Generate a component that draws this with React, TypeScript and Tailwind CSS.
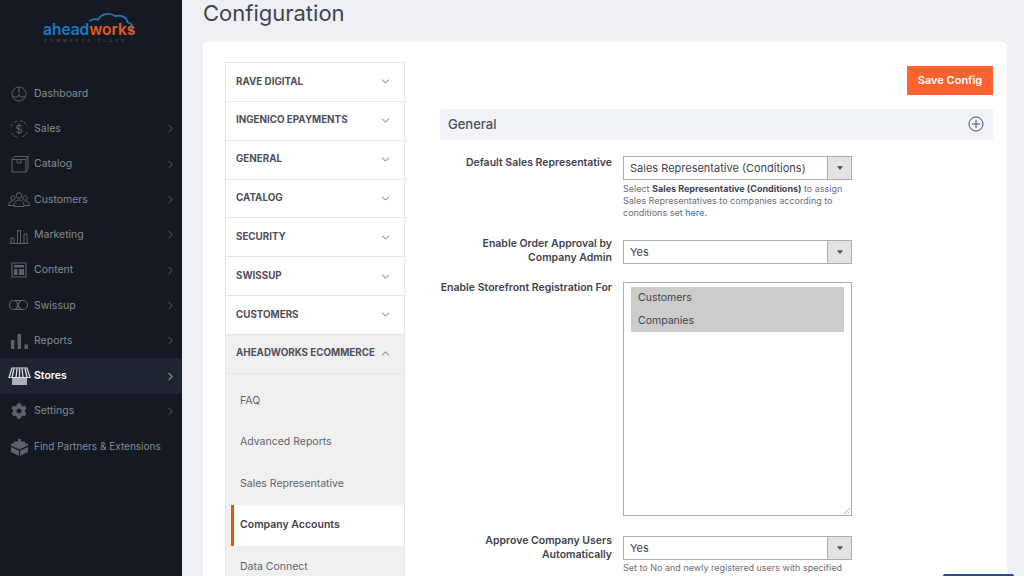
import { ChevronRight, ChevronDown, ChevronUp } from "lucide-react";
import { FaCog } from "react-icons/fa";
import type { ReactNode } from "react";

const FONT = "font-['Inter','Liberation_Sans',sans-serif]";

const ICON = "w-[24px] h-[24px] shrink-0";

const Dashboard = () => (
  <svg viewBox="0 0 24 24" className={ICON} fill="none" stroke="#5a606c" strokeWidth="1">
    <circle cx="12" cy="12" r="7" />
    <path d="M12 6v5M5.500 14.500c2 .5 3.500.5 5 .5l1.500-2.500 1.500 2.500c1.500 0 3 0 5-.5" />
  </svg>
);
const Sales = () => (
  <svg viewBox="0 0 24 24" className={ICON} fill="none" stroke="#5a606c" strokeWidth="1">
    <path d="M7 5.500a8 8 0 0 1 4-1.500M13 4a8 8 0 0 1 7 4.500M20 15a8 8 0 0 1-6 5M10 20a8 8 0 0 1-6-5M4 9.500a8 8 0 0 1 1.500-2.500" strokeDasharray="3 1" />
    <path d="M15 9.500c-.5-1.500-5-2-5.500.5s5.500 1.500 5.500 4-5 2-6 .5M12 6.500v11" strokeWidth="1.100" />
  </svg>
);
const Catalog = () => (
  <svg viewBox="0 0 24 24" className={ICON} fill="none" stroke="#5a606c" strokeWidth="1">
    <path d="M5 7.500h14V20H5zM5 7.500l2-3h14v12l-2 3.500M19 7.500l2-3M10 7.500v3.500h4V7.500" />
  </svg>
);
const Customers = () => (
  <svg viewBox="0 0 24 24" className={ICON} fill="none" stroke="#5a606c" strokeWidth="1">
    <circle cx="12" cy="7.500" r="2.800" />
    <circle cx="6" cy="10" r="2.200" />
    <circle cx="18" cy="10" r="2.200" />
    <path d="M1.500 17.500c0-3 2-4.500 4.500-4.500M22.500 17.500c0-3-2-4.500-4.500-4.500M7 18.500c0-4 2-6.500 5-6.500s5 2.500 5 6.500zM1.500 17.500H7M17 17.500h5.500" />
  </svg>
);
const Marketing = () => (
  <svg viewBox="0 0 24 24" className={ICON} fill="none" stroke="#5a606c" strokeWidth="1">
    <path d="M2.500 20.500h19M4 20v-5h3v5M10.500 20V7.500h3V20M17 20V11h3v9" />
  </svg>
);
const Content = () => (
  <svg viewBox="0 0 24 24" className={ICON} fill="none" stroke="#5a606c" strokeWidth="1.200">
    <path d="M5 5h14v14H5z" />
    <path d="M7 7h10v2.500H7zM7 11h3.500v6H7zM12 11h5v6h-5z" fill="#5a606c" stroke="none" />
  </svg>
);
const Swissup = () => (
  <svg viewBox="0 0 24 24" className={ICON} fill="none" stroke="#5a606c" strokeWidth="1.200">
    <rect x="2.500" y="7.500" width="18" height="9" rx="4.500" />
    <path d="M8 8c3 0 3 8 6 8M8 16c3 0 3-8 6-8" />
  </svg>
);
const Reports = () => (
  <svg viewBox="0 0 24 24" className={ICON} fill="#5a606c">
    <path d="M4 11h3.500v9H4zM10.500 5h3.500v15h-3.500zM17.500 15.500H21V20h-3.500z" />
  </svg>
);
const Stores = () => (
  <svg viewBox="0 0 24 24" className={ICON}>
    <path d="M5 14h15v7H5z" fill="#aab0bd" />
    <path d="M5 4h15l3 9.500H2z" fill="none" stroke="#dfe2e8" strokeWidth="1.200" />
    <path d="M7 4.500l-2 9M10 4.500l-1 9M12.500 4.500v9M15 4.500l1 9M18 4.500l2 9" stroke="#dfe2e8" strokeWidth="1.300" />
  </svg>
);
const Settings = () => (
  <div className={`${ICON} flex items-center justify-center`}>
    <FaCog size={16} color="#5a606c" />
  </div>
);
const Partners = () => (
  <svg viewBox="0 0 24 24" className={ICON} fill="#5a606c">
    <path d="M12.500 5.500 21 9v1.500l-8.500 4L4 10.500V9z" />
    <path d="M7 6.500h3V8H7zM11 4h3v2h-3zM15 6.500h3V8h-3zM11 9h3v2h-3z" />
    <path d="M4 12l8 3.800V21l-8-4zM21 12l-8 3.800V21l8-4z" />
  </svg>
);

const NAV: { label: string; icon: ReactNode; arrow?: boolean; active?: boolean }[] = [
  { label: "Dashboard", icon: <Dashboard /> },
  { label: "Sales", icon: <Sales />, arrow: true },
  { label: "Catalog", icon: <Catalog />, arrow: true },
  { label: "Customers", icon: <Customers />, arrow: true },
  { label: "Marketing", icon: <Marketing />, arrow: true },
  { label: "Content", icon: <Content />, arrow: true },
  { label: "Swissup", icon: <Swissup />, arrow: true },
  { label: "Reports", icon: <Reports />, arrow: true },
  { label: "Stores", icon: <Stores />, arrow: true, active: true },
  { label: "Settings", icon: <Settings />, arrow: true },
  { label: "Find Partners & Extensions", icon: <Partners /> },
];

const SECTIONS = ["RAVE DIGITAL", "INGENICO EPAYMENTS", "GENERAL", "CATALOG", "SECURITY", "SWISSUP", "CUSTOMERS"];

const SUB_ITEMS = ["FAQ", "Advanced Reports", "Sales Representative"];

function Logo() {
  return (
    <div className="relative h-[76px]">
      <svg viewBox="0 0 60 30" className="absolute left-[88px] top-[11px] w-[53px] h-[26px]" fill="none" stroke="#1f78c1" strokeWidth="2">
        <path d="M1 12c3-3 7-3 10-2 3-7 14-9 20-4 6-2 13 1 14 7 5 1 8 6 3 12" />
      </svg>
      <div className="absolute left-[43px] top-[21px] text-[15.500px] leading-[18px] font-semibold">
        <span className="text-[#1f78c1]">ahead</span>
        <span className="text-[#e8591f]">works</span>
      </div>
      <div className="absolute left-[44px] top-[38px] text-[4px] leading-[5px] tracking-[3.200px] text-[#565b66] whitespace-nowrap">
        COMMERCE CLOUD
      </div>
    </div>
  );
}

function Sidebar() {
  return (
    <aside className="w-[182px] shrink-0 h-full bg-[#141922]">
      <Logo />
      {NAV.map((item) => (
        <div
          key={item.label}
          className={`h-[35.300px] flex items-center pl-[7px] pr-[5px] ${item.active ? "bg-[#1f2532]" : ""}`}
        >
          <div className="w-[27px] shrink-0 flex justify-start">{item.icon}</div>
          <span
            className={`whitespace-nowrap ${item.arrow || item.label === "Dashboard" ? "text-[10.500px]" : "text-[10px]"} ${item.active ? "text-white font-semibold" : "text-[#858a95]"}`}
          >
            {item.label}
          </span>
          {item.arrow && (
            <ChevronRight
              size={13}
              strokeWidth={1.500}
              className={`ml-auto ${item.active ? "text-white" : "text-[#70757f]"}`}
            />
          )}
        </div>
      ))}
    </aside>
  );
}

function ConfigNav() {
  return (
    <div className="w-[180px] shrink-0 border-x border-t border-[#e6e6e6]">
      {SECTIONS.map((name) => (
        <div
          key={name}
          className="h-[38.850px] flex items-center justify-between pl-[10px] pr-[12px] border-b border-[#e6e6e6]"
        >
          <span className="text-[9.800px] font-bold text-[#514f59] whitespace-nowrap">{name}</span>
          <ChevronDown size={13} strokeWidth={1.500} className="text-[#514f59]" />
        </div>
      ))}
      <div className="bg-[#f0f0f0]">
        <div className="h-[38.850px] flex items-center justify-between pl-[10px] pr-[12px] border-b border-[#e6e6e6]">
          <span className="text-[9.800px] font-bold text-[#514f59] whitespace-nowrap">AHEADWORKS ECOMMERCE</span>
          <ChevronUp size={13} strokeWidth={1.500} className="text-[#514f59]" />
        </div>
        <div className="pt-[6px] pl-[5px]">
          {SUB_ITEMS.map((name) => (
            <div key={name} className="h-[41.600px] flex items-center pl-[9px] text-[10.500px] text-[#5f6570]">
              {name}
            </div>
          ))}
          <div className="h-[41.600px] flex items-center pl-[6px] border-l-[3px] border-[#eb5202] bg-white text-[10.500px] font-semibold text-[#41434d]">
            Company Accounts
          </div>
          <div className="h-[41.600px] flex items-center pl-[9px] text-[10.500px] text-[#5f6570]">Data Connect</div>
        </div>
      </div>
    </div>
  );
}

function Select({ value }: { value: string }) {
  return (
    <div className="w-[229px] h-[24px] flex border border-[#adadad] bg-white">
      <div className="flex-1 flex items-center pl-[6px] text-[11px] text-[#41434d] whitespace-nowrap">{value}</div>
      <div className="w-[24px] flex items-center justify-center bg-[#e3e3e3] border-l border-[#adadad]">
        <svg viewBox="0 0 8 5" className="w-[6px] h-[4px]" fill="#514f59">
          <path d="M0 0h8L4 5z" />
        </svg>
      </div>
    </div>
  );
}

function Label({ lines, className }: { lines: string[]; className: string }) {
  return (
    <div className={`w-[172px] shrink-0 text-right text-[10.500px] leading-[14px] font-semibold text-[#41434d] whitespace-nowrap ${className}`}>
      {lines.map((l) => (
        <div key={l}>{l}</div>
      ))}
    </div>
  );
}

function ConfigForm() {
  return (
    <div className="flex-1 min-w-0">
      <div className="flex justify-end pt-[4px]">
        <button className="w-[86px] h-[28.500px] bg-[#ff6131] text-white text-[11px] font-semibold">Save Config</button>
      </div>
      <div className="mt-[14.500px] h-[30.500px] bg-[#f0f3f8] flex items-center justify-between pl-[8px] pr-[9px]">
        <span className="text-[13px] font-medium text-[#4d4f5a]">General</span>
        <svg viewBox="0 0 16 16" className="w-[16px] h-[16px]" fill="none" stroke="#4d4f5a" strokeWidth="1">
          <circle cx="8" cy="8" r="7" />
          <path d="M8 4v8M4 8h8" />
        </svg>
      </div>

      <div className="mt-[16.500px] flex gap-[11px]">
        <Label lines={["Default Sales Representative"]} className="" />
        <div>
          <Select value="Sales Representative (Conditions)" />
          <p className="mt-[3px] w-[228px] text-[9px] leading-[12px] text-[#6d6f78]">
            Select <span className="font-bold text-[#41434d]">Sales Representative (Conditions)</span> to assign Sales
            Representatives to companies according to conditions set <span className="text-[#1979c3]">here.</span>
          </p>
        </div>
      </div>

      <div className="mt-[21px] flex gap-[11px]">
        <Label lines={["Enable Order Approval by", "Company Admin"]} className="-mt-[3px]" />
        <Select value="Yes" />
      </div>

      <div className="mt-[17px] flex gap-[11px]">
        <Label lines={["Enable Storefront Registration For"]} className="-mt-px" />
        <div className="relative w-[229px] h-[234px] border border-[#adadad] bg-white pt-[4px] px-[7px]">
          <div className="h-[22.500px] flex items-center pl-[7px] bg-[#cccccc] text-[10.500px] text-[#41434d]">Customers</div>
          <div className="h-[22.500px] flex items-center pl-[7px] bg-[#cccccc] text-[10.500px] text-[#41434d]">Companies</div>
          <svg viewBox="0 0 8 8" className="absolute right-[1px] bottom-[1px] w-[7px] h-[7px]" stroke="#8a8a8a" strokeWidth="0.800">
            <path d="M1 8 8 1M5 8l3-3" />
          </svg>
        </div>
      </div>

      <div className="mt-[20px] flex gap-[11px]">
        <Label lines={["Approve Company Users", "Automatically"]} className="-mt-[2px]" />
        <div>
          <Select value="Yes" />
          <p className="mt-[2px] w-[228px] text-[9px] leading-[12px] text-[#6d6f78]">
            Set to No and newly registered users with specified company domains will require manager approval
          </p>
        </div>
      </div>
    </div>
  );
}

export default function App() {
  return (
    <div className={`${FONT} relative w-[1024px] h-[576px] overflow-hidden flex bg-[#eff0f5]`}>
      <Sidebar />
      <main className="flex-1 min-w-0 pl-[21px] pr-[17px]">
        <h1 className="h-[41px] pb-[14px] flex items-center text-[22px] text-[#41434d]">Configuration</h1>
        <div className="h-[560px] overflow-hidden rounded-t-[6px] bg-white flex gap-[35px] pl-[22px] pr-[14px] pt-[21px]">
          <ConfigNav />
          <ConfigForm />
        </div>
      </main>
      <div className="absolute left-[943px] top-[574px] w-[71px] h-[6px] rounded-t-[2px] bg-[#1d4f9e]" />
    </div>
  );
}
